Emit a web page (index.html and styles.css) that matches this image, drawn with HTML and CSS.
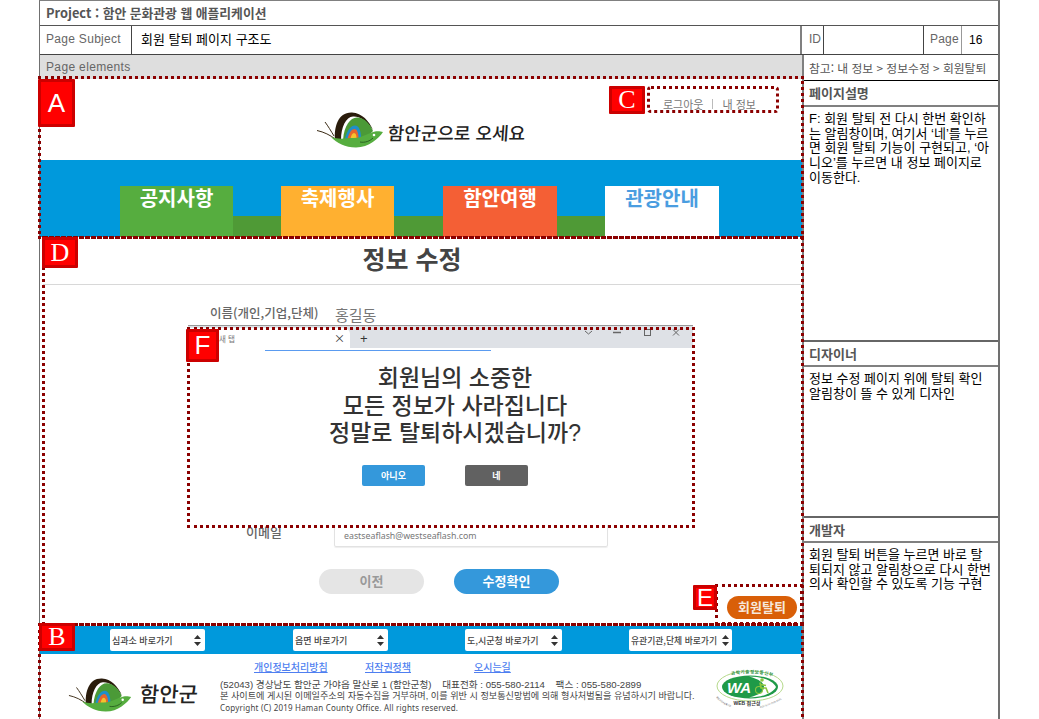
FILE: index.html
```html
<!DOCTYPE html>
<html lang="ko">
<head>
<meta charset="utf-8">
<title>회원 탈퇴 페이지 구조도</title>
<link rel="stylesheet" href="styles.css">
</head>
<body>
<svg class="defs" width="0" height="0" aria-hidden="true">
  <symbol id="haman-mark" viewBox="0 0 70 38">
    <path d="M1 19.500C8 21 14 24 20 28.500" fill="none" stroke="#3a2a14" stroke-width="1"/>
    <path d="M9 11C12 15 15 20 18 25" fill="none" stroke="#3a2a14" stroke-width="1"/>
    <path d="M19 29C18 16 22 1 36 1.500C46 2 53 10 57 19C50 9 43 5 37 5.500C30 6 25 16 25 29Z" fill="#2a1c0c"/>
    <path d="M27 29C28 14 35 5.500 42 6.500C49 7.500 54 13 57 20L48 29Z" fill="#4b9a37"/>
    <path d="M29 28C31 19 35 14.500 39 14.500C43 14.500 45 20 45 27Z" fill="#1f8fc9"/>
    <path d="M31.500 28C33 22 35.500 18 38.500 18C41 18 42.500 22 42.500 27Z" fill="#e5662b"/>
    <path d="M34.500 28C35 24 36.500 22 38 22C39.800 22 40.500 24.500 40.500 27Z" fill="#f4c22d"/>
    <path d="M15 26C24 29 30 27 38 27C46 27 52 22 59 20.500C62 20 65 20.500 67 21C63 27 53 36.500 40 36.500C29 36.500 21 32 15 26Z" fill="#56ad3f"/>
    <circle cx="58" cy="24" r="1.300" fill="#fff"/>
    <path d="M44 31C49 32 54 30 57 27" fill="none" stroke="#1f4f1a" stroke-width=".8"/>
  </symbol>
</svg>

<main class="sheet">
  <header class="project">Project : 함안 문화관광 웹 애플리케이션</header>

  <div class="subject">
    <div class="cell cell-label">Page Subject</div>
    <div class="cell cell-title">회원 탈퇴 페이지 구조도</div>
    <div class="cell cell-id">ID</div>
    <div class="cell cell-blank"></div>
    <div class="cell cell-page">Page</div>
    <div class="cell cell-num">16</div>
  </div>

  <div class="body">
    <section class="left">
      <div class="elements-title">Page elements</div>
      <div class="elements">
        <div class="site-head">
          <nav class="util"><span>로그아웃</span><i class="util-sep"></i><span>내 정보</span></nav>
          <div class="brand">
            <svg class="mark" width="70" height="38"><use href="#haman-mark"/></svg>
            <span class="brand-text">함안군으로 오세요</span>
          </div>
        </div>

        <nav class="menu">
          <a class="tab tab-green">공지사항</a><i class="tab-gap gap-a"></i>
          <a class="tab tab-yellow">축제행사</a><i class="tab-gap gap-b"></i>
          <a class="tab tab-red">함안여행</a><i class="tab-gap gap-a"></i>
          <a class="tab tab-white">관광안내</a>
        </nav>

        <div class="info">
          <h1 class="info-title">정보 수정</h1>
          <div class="field field-name">
            <label class="field-label">이름(개인,기업,단체)</label>
            <span class="field-value">홍길동</span>
          </div>
          <div class="field field-mail">
            <label class="field-label mail-label">이메일</label>
            <div class="input">eastseaflash@westseaflash.com</div>
          </div>
          <div class="actions">
            <button class="pill pill-grey">이전</button>
            <button class="pill pill-blue">수정확인</button>
          </div>
          <div class="withdraw-row"><button class="withdraw">회원탈퇴</button></div>
        </div>

        <footer class="site-foot">
          <div class="quick">
            <div class="select">심과소 바로가기<svg class="updown" width="7" height="11" viewBox="0 0 7 11"><path d="M3.500 0L7 4H0ZM3.500 11L0 7H7Z"/></svg></div>
            <div class="select">읍면 바로가기<svg class="updown" width="7" height="11" viewBox="0 0 7 11"><path d="M3.500 0L7 4H0ZM3.500 11L0 7H7Z"/></svg></div>
            <div class="select select-3">도,시군청 바로가기<svg class="updown" width="7" height="11" viewBox="0 0 7 11"><path d="M3.500 0L7 4H0ZM3.500 11L0 7H7Z"/></svg></div>
            <div class="select select-4">유관기관,단체 바로가기<svg class="updown" width="7" height="11" viewBox="0 0 7 11"><path d="M3.500 0L7 4H0ZM3.500 11L0 7H7Z"/></svg></div>
          </div>
          <div class="foot-body">
            <div class="foot-brand">
              <svg class="mark" width="66" height="36"><use href="#haman-mark"/></svg>
              <span class="foot-brand-text">함안군</span>
            </div>
            <div class="foot-info">
              <div class="foot-links"><a>개인정보처리방침</a><a>저작권정책</a><a>오시는길</a></div>
              <p class="addr">(52043) 경상남도 함안군 가야읍 말산로 1 (함안군청) &nbsp;&nbsp; 대표전화 : 055-580-2114 &nbsp;&nbsp; 팩스 : 055-580-2899</p>
              <p class="notice">본 사이트에 게시된 이메일주소의 자동수집을 거부하며, 이를 위반 시 정보통신망법에 의해 형사처벌됨을 유념하시기 바랍니다.</p>
              <p class="copy">Copyright (C) 2019 Haman County Office. All rights reserved.</p>
            </div>
            <svg class="wa" width="70" height="50" viewBox="0 0 70 50">
              <defs>
                <path id="wa-top" d="M9 9C17 3 51 3 59 9"/>
                <path id="wa-low-left" d="M0 28C4 33 10 37 18 39"/>
                <path id="wa-low-right" d="M44 39C52 37 62 33 69 28"/>
              </defs>
              <ellipse cx="34" cy="17" rx="33" ry="15" fill="#fff" stroke="#b5d98a" stroke-width="1"/>
              <ellipse cx="34" cy="18" rx="28" ry="11.500" fill="#1f9a48"/>
              <path d="M33 7.500C46 7.500 57 12 60 18C57 24 46 28.500 33 28.500C44 26 48 22 48 18C48 14 43 10 33 7.500Z" fill="#fff"/>
              <text class="wa-big" x="11" y="24">WA</text>
              <circle cx="46" cy="11" r="1.800" fill="#8cc63f"/>
              <path d="M44 13.500L45 19H50L52 24M45 15.500L50 16.500" fill="none" stroke="#8cc63f" stroke-width="1.600"/>
              <circle cx="43" cy="21" r="3.500" fill="none" stroke="#8cc63f" stroke-width="1.100"/>
              <text class="wa-arc"><textPath href="#wa-top" startOffset="7">과학기술정보통신부</textPath></text>
              <text class="wa-label" x="31" y="36" text-anchor="middle">WEB 접근성</text>
              <text class="wa-small"><textPath href="#wa-low-left">웹접근성인증평가원</textPath></text>
              <text class="wa-small"><textPath href="#wa-low-right">2021.01.01~2022.01.01</textPath></text>
            </svg>
          </div>
        </footer>

        <div class="modal">
          <div class="chrome">
            <div class="chrome-tab"><span class="chrome-name">새 탭</span><span class="chrome-x">×</span></div>
            <span class="chrome-plus">+</span>
            <svg class="win" width="100" height="10" viewBox="0 0 100 10" fill="none" stroke="#666">
              <path d="M1 3L4.500 6L8 3"/>
              <path d="M29 4.500H37" stroke-width="1.500"/>
              <rect x="60.500" y="1.500" width="6" height="6"/>
              <path d="M89 1.500L95 7.500M95 1.500L89 7.500"/>
            </svg>
          </div>
          <div class="loadbar"></div>
          <p class="modal-msg">회원님의 소중한<br>모든 정보가 사라집니다<br>정말로 탈퇴하시겠습니까?</p>
          <div class="modal-btns">
            <button class="mbtn mbtn-blue">아니오</button>
            <button class="mbtn mbtn-dark">네</button>
          </div>
        </div>

        <div class="zone zone-a"></div>
        <div class="zone zone-b"></div>
        <div class="zone zone-c"></div>
        <div class="zone zone-d"></div>
        <div class="zone zone-e"></div>
        <div class="zone zone-f"></div>
        <div class="tag tag-a">A</div>
        <div class="tag tag-b">B</div>
        <div class="tag tag-c">C</div>
        <div class="tag tag-d">D</div>
        <div class="tag tag-e">E</div>
        <div class="tag tag-f">F</div>
      </div>
    </section>

    <aside class="right">
      <div class="ref">참고: 내 정보 &gt; 정보수정 &gt; 회원탈퇴</div>
      <section class="note note-1">
        <h2 class="note-head">페이지설명</h2>
        <p class="note-text">F: 회원 탈퇴 전 다시 한번 확인하<br>는 알림창이며, 여기서 ‘네’를 누르<br>면 회원 탈퇴 기능이 구현되고, ‘아<br>니오’를 누르면 내 정보 페이지로<br>이동한다.</p>
      </section>
      <section class="note note-2">
        <h2 class="note-head">디자이너</h2>
        <p class="note-text">정보 수정 페이지 위에 탈퇴 확인<br>알림창이 뜰 수 있게 디자인</p>
      </section>
      <section class="note note-3">
        <h2 class="note-head">개발자</h2>
        <p class="note-text">회원 탈퇴 버튼을 누르면 바로 탈<br>퇴되지 않고 알림창으로 다시 한번<br>의사 확인할 수 있도록 기능 구현</p>
      </section>
    </aside>
  </div>
</main>
</body>
</html>
```
FILE: styles.css
```css
* { box-sizing: border-box; }
html, body { margin: 0; height: 719px; overflow: hidden; background: #fff; }
body { font-family: "Noto Sans CJK KR", "Liberation Sans", sans-serif; color: #000; }
.defs { position: absolute; }
p, h1, h2 { margin: 0; }
button { font-family: inherit; border: 0; padding: 0; }
a { display: block; }
i { display: block; }

.sheet {
  width: 961px;
  height: 719px;
  margin-left: 39px;
  border-top: 1px solid #808080;
  border-left: 1px solid #707070;
  border-right: 2px solid #707070;
  display: flex;
  flex-direction: column;
}
.project {
  height: 25px;
  line-height: 24px;
  padding-left: 6px;
  font-size: 12.800px;
  font-weight: 700;
  color: #555;
  border-bottom: 1px solid #555;
  white-space: nowrap;
}

.subject {
  height: 29px;
  display: flex;
  border-bottom: 1px solid #444;
  font-size: 13px;
}
.cell { line-height: 26px; white-space: nowrap; }
.cell-label {
  width: 92px;
  padding-left: 6px;
  border-right: 1px solid #444;
  color: #666;
  font-family: "Liberation Sans", sans-serif;
  font-size: 12px;
  letter-spacing: .3px;
}
.cell-title { width: 670px; padding-left: 9px; border-right: 2px solid #808080; }
.cell-id { width: 22px; padding-left: 7px; border-right: 1px solid #444; color: #666; font-size: 12px; font-family: "Liberation Sans", sans-serif; }
.cell-blank { width: 100px; border-right: 1px solid #444; }
.cell-page { width: 38px; padding-left: 6px; border-right: 1px solid #999; color: #666; font-family: "Liberation Sans", sans-serif; font-size: 12px; letter-spacing: .2px; }
.cell-num { padding-left: 7px; line-height: 29px; font-size: 12px; font-family: "Liberation Sans", sans-serif; }

.body { flex: 1; display: flex; min-height: 0; }
.left { width: 762px; }
.elements-title {
  height: 24px;
  line-height: 25px;
  padding-left: 6px;
  background: #dedede;
  color: #666;
  font-family: "Liberation Sans", sans-serif;
  font-size: 12px;
  letter-spacing: .35px;
}
.elements { position: relative; width: 762px; height: 641px; }

/* site header */
.site-head { height: 81px; display: flex; flex-direction: column; }
.util {
  height: 32px;
  padding: 17px 0 0 623px;
  display: flex;
  align-items: center;
  gap: 9px;
  font-size: 11px;
  color: #777;
}
.util-sep { width: 1px; height: 10px; background: #bbb; }
.brand { display: flex; align-items: center; height: 38px; padding-left: 276px; gap: 2px; }
.brand-text { font-size: 18px; font-weight: 500; color: #222; white-space: nowrap; padding-top: 4px; transform: skewX(-4deg); }

.menu { height: 77px; background: #0099dc; display: flex; align-items: flex-end; padding-left: 80px; }
.tab {
  width: 113px;
  height: 51px;
  text-align: center;
  color: #fff;
  font-size: 20px;
  font-weight: 700;
  line-height: 24px;
}
.tab-green { background: #56ad3f; }
.tab-yellow { background: #ffb030; }
.tab-red { background: #f45f35; width: 114px; }
.tab-white { background: #fff; color: #4a9de0; width: 114px; }
.tab-gap { height: 21px; background: #4f9a36; }
.gap-a { width: 48px; }
.gap-b { width: 49px; }

/* information form */
.info { height: 389px; display: flex; flex-direction: column; }
.info-title {
  height: 48px;
  margin-left: 3px;
  padding-right: 21px;
  line-height: 43px;
  text-align: center;
  font-size: 25px;
  font-weight: 700;
  color: #444;
  border-bottom: 1px solid #d8d8d8;
}
.field { display: flex; align-items: center; padding-left: 170px; gap: 17px; }
.field-name { height: 20px; margin-top: 17px; }
.field-label { width: 108px; text-align: center; font-size: 12.500px; font-weight: 500; color: #666; white-space: nowrap; }
.field-value { font-size: 15px; color: #777; padding-top: 4px; }
.field-mail { margin-top: 191px; height: 34px; gap: 16px; }
.mail-label { font-size: 13px; padding-top: 3px; }
.input {
  width: 274px;
  height: 34px;
  padding: 15px 0 0 9px;
  border: 1px solid #e2e2e2;
  border-radius: 2px;
  font-family: "Noto Sans", sans-serif;
  font-size: 8.800px;
  line-height: 14px;
  color: #777;
  box-shadow: 0 1px 1px #eee;
}
.actions { display: flex; gap: 30px; padding-left: 279px; margin-top: 22px; }
.pill { width: 105px; height: 25px; padding-bottom: 3px; border-radius: 13px; font-size: 13px; font-weight: 700; }
.pill-grey { background: #e5e5e5; color: #999; }
.pill-blue { background: #3498db; color: #fff; }
.withdraw-row { display: flex; justify-content: flex-end; padding-right: 5px; margin-top: 2px; }
.withdraw { width: 70px; height: 23px; padding-bottom: 2px; border-radius: 12px; background: #d95f08; color: #f6e7da; font-size: 13px; font-weight: 700; }

/* footer */
.quick {
  height: 28px;
  background: #0099dc;
  display: grid;
  grid-template-columns: 183px 172px 164px auto;
  align-items: center;
  padding-left: 70px;
}
.select {
  width: 95px;
  height: 22px;
  padding: 0 4px 0 2px;
  background: #fff;
  border-radius: 2px;
  display: flex;
  align-items: center;
  justify-content: space-between;
  font-size: 9px;
  font-weight: 500;
  color: #444;
  white-space: nowrap;
}
.select-3 { width: 97px; }
.select-4 { width: 103px; padding-right: 3px; font-size: 8.800px; }
.updown { fill: #333; flex: none; }
.foot-body { height: 65px; display: flex; background: #fff; }
.foot-brand { width: 180px; padding: 23px 0 0 28px; display: flex; align-items: flex-start; gap: 6px; }
.foot-brand-text { font-size: 21px; font-weight: 500; color: #222; line-height: 32px; transform: skewX(-4deg); }
.foot-info { width: 496px; }
.foot-links { display: grid; grid-template-columns: 111px 109px auto; padding: 5px 0 0 34px; height: 25px; font-size: 10px; line-height: 16px; font-weight: 500; color: #4f7ff0; text-decoration: underline; }
.addr, .notice, .copy { white-space: nowrap; color: #444; font-family: "Liberation Sans", "Noto Sans CJK KR", sans-serif; }
.addr { font-size: 9.650px; line-height: 12px; }
.notice { font-size: 9.130px; line-height: 11px; }
.copy { font-family: "Noto Sans", sans-serif; font-size: 8px; line-height: 12px; letter-spacing: .2px; }
.wa { flex: none; margin-top: 15px; }
.wa-big { font: italic 700 15px "Liberation Sans", sans-serif; fill: #fff; }
.wa-arc { font: 700 4.500px "Liberation Sans", "Noto Sans CJK KR", sans-serif; fill: #2c8f45; letter-spacing: .5px; }
.wa-label { font: 700 5px "Liberation Sans", "Noto Sans CJK KR", sans-serif; fill: #333; }
.wa-small { font: 2.200px "Liberation Sans", "Noto Sans CJK KR", sans-serif; fill: #555; }

/* modal over the form */
.modal {
  position: absolute;
  left: 148px;
  top: 246px;
  width: 505px;
  height: 200px;
  background: #fff;
}
.chrome { height: 23px; background: #dee1e6; border-top: 1px solid #999; display: flex; align-items: flex-end; position: relative; }
.chrome-tab { width: 162px; height: 20px; background: #fff; border-top-right-radius: 6px; display: flex; justify-content: space-between; align-items: center; padding: 0 5px 0 31px; }
.chrome-name { font-size: 7.500px; color: #777; }
.chrome-x { font-size: 11px; color: #333; }
.chrome-plus { margin: 0 0 2px 10px; font-size: 13px; color: #333; font-family: "Liberation Sans", sans-serif; }
.win { position: absolute; left: 396px; top: 2px; }
.loadbar { height: 1px; margin: 2px 202px 0 77px; background: #5a9bf0; }
.modal-msg { margin-top: 14px; padding-left: 29px; text-align: center; font-family: "Liberation Sans", "Noto Sans CJK KR", sans-serif; font-size: 23px; font-weight: 500; line-height: 27.500px; color: #333; white-space: nowrap; }
.modal-btns { display: flex; justify-content: center; gap: 40px; padding-left: 9px; margin-top: 17px; }
.mbtn { width: 63px; height: 21px; border-radius: 2px; color: #fff; font-size: 9px; font-weight: 700; }
.mbtn-blue { background: #3498db; }
.mbtn-dark { background: #616161; }

/* annotation overlays */
.zone { position: absolute; border: 3px dotted #8b0000; }
.zone-a { left: -2px; top: -3px; width: 766px; height: 163px; }
.zone-b { left: -2px; top: 544px; width: 766px; height: 100px; }
.zone-c { left: 607px; top: 7px; width: 132px; height: 27px; border-radius: 4px; }
.zone-d { left: 2px; top: 157px; width: 762px; height: 390px; }
.zone-e { left: 675px; top: 505px; width: 88px; height: 41px; }
.zone-f { left: 147px; top: 248px; width: 508px; height: 201px; }
.tag {
  position: absolute;
  background: #f00;
  border: 3px solid #c00;
  border-radius: 1px;
  color: #fff;
  display: flex;
  align-items: center;
  justify-content: center;
  line-height: 1;
}
.tag-a { left: -2px; top: 0; width: 37px; height: 48px; font: 26px "Liberation Sans", sans-serif; }
.tag-b { left: -1px; top: 544px; width: 36px; height: 28px; font: 26px "Liberation Serif", serif; }
.tag-c { left: 569px; top: 7px; width: 36px; height: 28px; font: 26px "Liberation Serif", serif; }
.tag-d { left: 2px; top: 158px; width: 36px; height: 31px; font: 26px "Liberation Serif", serif; }
.tag-e { left: 653px; top: 506px; width: 24px; height: 25px; font: 24px "Liberation Sans", sans-serif; }
.tag-f { left: 146px; top: 250px; width: 33px; height: 33px; font: 26px "Liberation Sans", sans-serif; }

/* right column */
.right { flex: 1; border-left: 2px solid #808080; display: flex; flex-direction: column; font-size: 13px; }
.ref { height: 26px; line-height: 25px; padding-left: 5px; color: #555; font-size: 11.800px; border-bottom: 1px solid #000; white-space: nowrap; }
.note { display: flex; flex-direction: column; }
.note-1 { height: 259px; }
.note-2 { height: 176px; border-top: 2px solid #666; }
.note-3 { flex: 1; border-top: 2px solid #666; }
.note-head {
  height: 25px;
  line-height: 23px;
  padding-left: 5px;
  font-size: 13px;
  font-weight: 700;
  color: #555;
  border-bottom: 2px solid #808080;
}
.note-1 .note-head { height: 26px; }
.note-text { padding: 5px 0 0 5px; font-family: "Liberation Sans", "Noto Sans CJK KR", sans-serif; line-height: 14.700px; white-space: nowrap; font-size: 13px; }
```
